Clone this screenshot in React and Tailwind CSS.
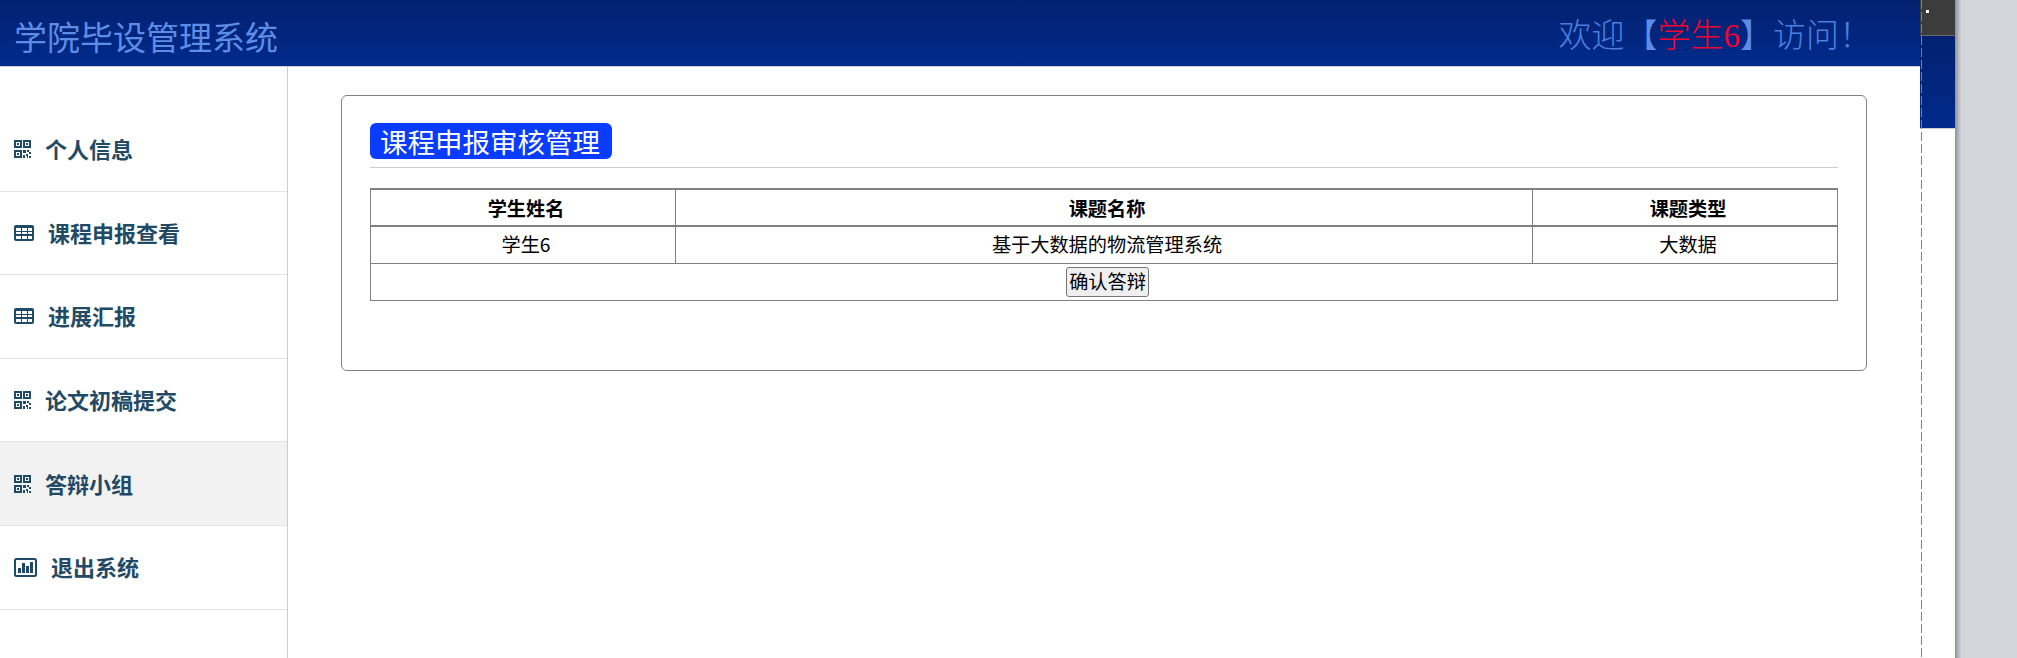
const QrIcon = () => (
  <svg width="17" height="18" viewBox="0 0 17 18" fill="#1f4a66" shapeRendering="crispEdges" className="shrink-0">
    <path fillRule="evenodd" d="M0 0h8v8H0zM2 2v4h4V2zM9 0h8v8H9zM11 2v4h4V2zM0 10h8v8H0zM2 12v4h4v-4z" />
    <path d="M3 3h2v2H3zM12 3h2v2h-2zM3 13h2v2H3zM9 10h3v3H9zM13 10h2v2h-2zM15 12h2v2h-2zM9 15h2v3H9zM12 14h2v2h-2zM13 16h1v2h-1zM15 16h2v2h-2z" />
  </svg>
);

const TableIcon = () => (
  <svg width="20" height="16" viewBox="0 0 20 16" className="shrink-0">
    <rect width="20" height="16" rx="2" fill="#1f4a66" />
    <path fill="#fff" shapeRendering="crispEdges" d="M2 3h4.500v2.500H2zM7.500 3h5v2.500h-5zM13.500 3H18v2.500h-4.500zM2 6.800h4.500v2.600H2zM7.500 6.800h5v2.600h-5zM13.500 6.800H18v2.600h-4.500zM2 10.700h4.500V14H2zM7.500 10.700h5V14h-5zM13.500 10.700H18V14h-4.500z" />
  </svg>
);

const ChartIcon = () => (
  <svg width="23" height="19" viewBox="0 0 23 19" className="shrink-0">
    <rect x="1" y="1" width="21" height="17" rx="1.500" fill="none" stroke="#1f4a66" strokeWidth="2" />
    <path fill="#1f4a66" shapeRendering="crispEdges" d="M4 10h2.500v5H4zM8 5h2.500v10H8zM12 8h2.500v7H12zM16 4h2.500v11H16z" />
  </svg>
);

const menu = [
  { label: "个人信息", icon: <QrIcon />, gap: "gap-[14px]" },
  { label: "课程申报查看", icon: <TableIcon />, gap: "gap-[14px]" },
  { label: "进展汇报", icon: <TableIcon />, gap: "gap-[14px]" },
  { label: "论文初稿提交", icon: <QrIcon />, gap: "gap-[14px]" },
  { label: "答辩小组", icon: <QrIcon />, gap: "gap-[14px]", active: true },
  { label: "退出系统", icon: <ChartIcon />, gap: "gap-[14px]" },
];

export default function App() {
  return (
    <div className="flex h-[658px] w-[2017px] overflow-hidden bg-white font-['Noto_Sans_CJK_SC','Liberation_Sans',sans-serif]">
      <div className="flex w-[1920px] shrink-0 flex-col">
        <header className="flex h-[67px] shrink-0 items-center justify-between border-b border-[#cfcfcf] bg-gradient-to-b from-[#03206f] to-[#012b8c] pl-[14px] pr-[48px] pt-[7px]">
          <span className="text-[33px] leading-none text-[#5d8de6]">学院毕设管理系统</span>
          <span className="font-['Liberation_Serif','Noto_Sans_CJK_SC',serif] text-[33px] font-light leading-none text-[#4a7fe0]">
            欢迎<span className="text-[#5d8de6]">【</span><span className="text-[#f5032d]">学生6</span><span className="text-[#5d8de6]">】</span>访问！
          </span>
        </header>

        <div className="flex min-h-0 flex-1">
          <aside className="w-[288px] shrink-0 border-r border-[#cccccc] pt-[41px]">
            {menu.map((item) => (
              <div
                key={item.label}
                className={`flex h-[83.6px] items-center border-b border-[#e2e2e2] pl-[14px] ${item.gap} ${item.active ? "bg-[#f2f2f2]" : ""}`}
              >
                {item.icon}
                <span className="pb-[2px] text-[22px] font-bold leading-none text-[#224a64]">{item.label}</span>
              </div>
            ))}
          </aside>

          <main className="flex-1 pl-[53px] pr-[53px] pt-[28px]">
            <section className="h-[276px] rounded-[6px] border border-[#808080] px-[28px] pt-[27px]">
              <div className="border-b border-[#cccccc] pb-2">
                <h2 className="inline-block h-9 rounded-[6px] bg-[#0a3cff] pl-[10px] pr-[12px] text-[27.5px] font-normal leading-9 text-white">
                  课程申报审核管理
                </h2>
              </div>
              <table className="mt-5 w-full table-fixed border-collapse text-center text-[19.2px] leading-[26px] text-black">
                <colgroup>
                  <col className="w-[305px]" />
                  <col className="w-[857px]" />
                  <col />
                </colgroup>
                <thead>
                  <tr className="h-[37px] border-y-2 border-[#808080]">
                    <th className="border-x border-[#808080] pl-[6px] font-bold">学生姓名</th>
                    <th className="border-x border-[#808080] pl-[6px] font-bold">课题名称</th>
                    <th className="border-x border-[#808080] pl-[6px] font-bold">课题类型</th>
                  </tr>
                </thead>
                <tbody>
                  <tr className="h-[37px] border-b border-[#808080]">
                    <td className="border-x border-[#808080] pb-[2px] pl-[6px]">学生6</td>
                    <td className="border-x border-[#808080] pb-[2px] pl-[6px]">基于大数据的物流管理系统</td>
                    <td className="border-x border-[#808080] pb-[2px] pl-[6px]">大数据</td>
                  </tr>
                  <tr className="h-[37px] border-b border-[#808080]">
                    <td colSpan={3} className="border-x border-[#808080] p-0 pl-[7px]">
                      <button className="h-[30px] w-[83px] rounded-[3px] border border-[#767676] bg-[#efefef] align-middle text-[19.2px] leading-none text-black">
                        确认答辩
                      </button>
                    </td>
                  </tr>
                </tbody>
              </table>
            </section>
          </main>
        </div>
      </div>

      {/* sliver of the window behind */}
      <div className="relative w-[35px] shrink-0">
        <div className="h-[36px] border-b border-[#6b6b6b] bg-[#3c3c3c] pl-[6px] pt-[10px]">
          <div className="h-[3px] w-[3px] bg-white" />
        </div>
        <div className="h-[93px] border-b border-[#cfcfcf] bg-gradient-to-b from-[#03206f] to-[#012b8c]" />
        <div className="absolute bottom-0 left-px top-0 w-px bg-[repeating-linear-gradient(to_bottom,#1d9bf0_0,#1d9bf0_9px,transparent_9px,transparent_12px)]" />
      </div>
      <div className="flex-1 bg-[#d2d5da] bg-gradient-to-r from-[#8f9094] from-0% to-[#d2d5da] to-[10%]" />
    </div>
  );
}
